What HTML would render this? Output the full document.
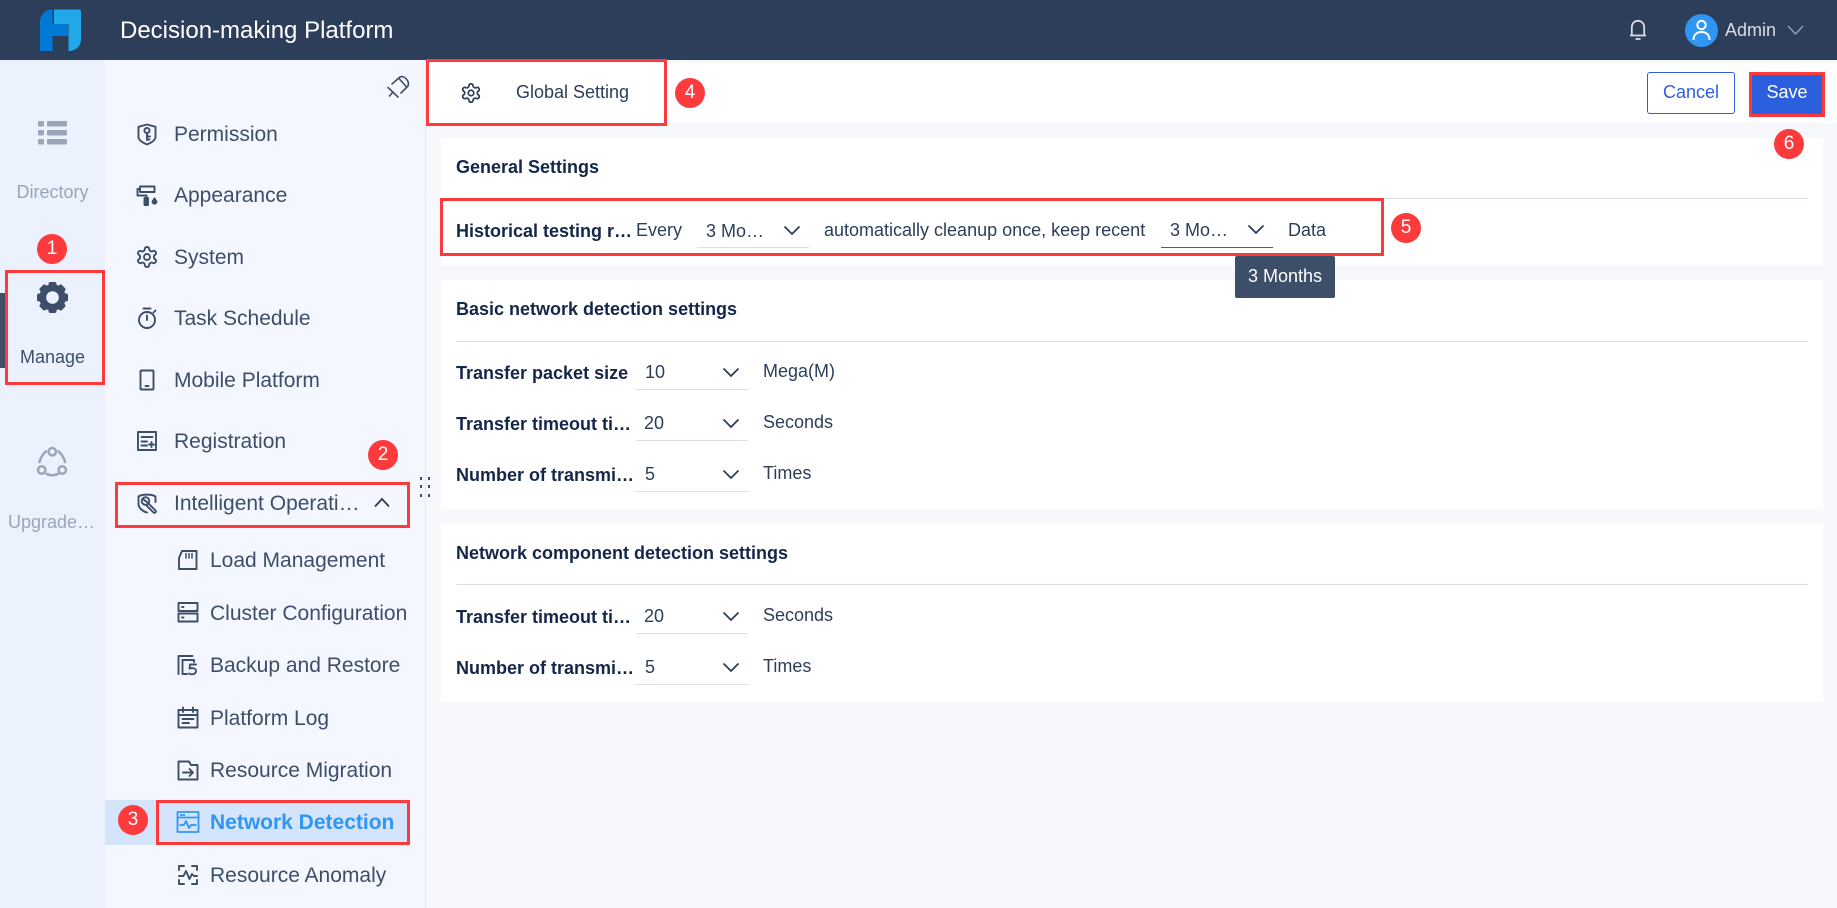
<!DOCTYPE html>
<html><head><meta charset="utf-8"><title>Global Setting</title>
<style>
*{box-sizing:border-box}
html,body{margin:0;padding:0}
body{width:1837px;height:908px;position:relative;overflow:hidden;background:#f7f8fc;font-family:"Liberation Sans",Arial,sans-serif;color:#2c3e5a;font-size:18px}
.a{position:absolute}
.t{position:absolute;white-space:nowrap;line-height:24px;height:24px}
.n{font-size:21px;color:#3d4e68;margin-top:1px}
.b{font-weight:bold;color:#14264a;font-size:18px}
.card{position:absolute;left:441px;width:1382px;background:#fff}
.div{position:absolute;left:456px;width:1352px;height:1px;background:#dfe1ea}
.ul{position:absolute;height:1px;background:#dcdee8;width:112px}
.rb{position:absolute;border:3px solid #fd3a3c}
.c{position:absolute;width:30px;height:30px;border-radius:50%;background:#fd3a3c;color:#fff;text-align:center;line-height:30px;font-size:19px}
svg{position:absolute;overflow:visible}
.ic{fill:none;stroke:#3d4e68;stroke-width:1.9;stroke-linejoin:round;stroke-linecap:round}
.ch{fill:none;stroke:#2c3e5a;stroke-width:1.8}
</style></head><body>

<!-- main bg blocks -->
<div class="a" style="left:0;top:0;width:1837px;height:60px;background:#2d3e5a"></div>
<div class="a" style="left:0;top:60px;width:105px;height:848px;background:#ebf2fd"></div>
<div class="a" style="left:105px;top:60px;width:321px;height:848px;background:#f4f7ff;border-right:1px solid #e6e9f0"></div>
<div class="a" style="left:426px;top:63px;width:1411px;height:60px;background:#fff"></div>

<!-- top bar -->
<svg style="left:0;top:0" width="100" height="60">
<path d="M52.5 9.5C45 9.5 40 15 40 22V51H52.5V36H68V24H52.5Z" fill="#0079d4"/>
<path d="M54 9.5H79Q81 9.5 81 12V39C81 46 76 51 68.5 51V24H54Z" fill="#1fa9e9"/>
</svg>
<div class="t" style="left:120px;top:19px;font-size:24px;color:#fff">Decision-making Platform</div>
<svg style="left:1626px;top:18px" width="24" height="24" fill="none" stroke="#d8dce3" stroke-width="1.8">
<path d="M4 17.5H20M5.8 17.5V9.500C5.8 5.5 8.5 2.8 12 2.8S18.2 5.5 18.2 9.5V17.5"/>
<path d="M9.5 21H14.5"/>
</svg>
<div class="a" style="left:1685px;top:14px;width:33px;height:33px;border-radius:50%;background:#2f96f3"></div>
<svg style="left:1685px;top:14px" width="33" height="33" fill="none" stroke="#fff" stroke-width="2">
<circle cx="16.5" cy="11" r="4.2"/><path d="M8.5 26C8.5 20.5 12 18 16.5 18S24.5 20.5 24.5 26"/>
</svg>
<div class="t" style="left:1725px;top:18px;font-size:18px;color:#d9dde4">Admin</div>
<svg style="left:1787px;top:24px" width="17" height="12" fill="none" stroke="#8f9bad" stroke-width="1.6"><path d="M1 2L8.5 10L16 2"/></svg>

<!-- rail -->
<div class="a" style="left:0;top:293px;width:5px;height:75px;background:#3d4e68"></div>
<svg style="left:37px;top:120px" width="30" height="26" fill="#9aa5b8">
<rect x="1" y="1" width="6" height="5.500" rx="1"/><rect x="10" y="1" width="20" height="5.500" rx="1"/>
<rect x="1" y="10" width="6" height="5.500" rx="1"/><rect x="10" y="10" width="20" height="5.500" rx="1"/>
<rect x="1" y="19" width="6" height="5.500" rx="1"/><rect x="10" y="19" width="20" height="5.500" rx="1"/>
</svg>
<div class="t" style="left:0;width:105px;text-align:center;top:180px;color:#9aa5b8">Directory</div>
<svg style="left:37px;top:282px" width="32" height="32" fill="#3d4e68">
<g transform="translate(15.5,15.5)">
<circle r="9.8" fill="none" stroke="#3d4e68" stroke-width="7"/>
<rect x="-4" y="-15.5" width="8" height="6" rx="2"/>
<rect x="-4" y="-15.5" width="8" height="6" rx="2" transform="rotate(45)"/>
<rect x="-4" y="-15.5" width="8" height="6" rx="2" transform="rotate(90)"/>
<rect x="-4" y="-15.5" width="8" height="6" rx="2" transform="rotate(135)"/>
<rect x="-4" y="-15.5" width="8" height="6" rx="2" transform="rotate(180)"/>
<rect x="-4" y="-15.5" width="8" height="6" rx="2" transform="rotate(225)"/>
<rect x="-4" y="-15.5" width="8" height="6" rx="2" transform="rotate(270)"/>
<rect x="-4" y="-15.5" width="8" height="6" rx="2" transform="rotate(315)"/>
</g></svg>
<div class="t" style="left:0;width:105px;text-align:center;top:345px;color:#3d4e68">Manage</div>
<svg style="left:36px;top:446px" width="34" height="32" fill="none" stroke="#9aa5b8" stroke-width="2.500">
<circle cx="16.3" cy="5.700" r="3.700"/><circle cx="5.700" cy="24" r="3.700"/><circle cx="26.300" cy="24" r="3.700"/>
<path d="M3.300 17C4 12 6.500 8.500 10.700 4.500M22 4.500C26 8.500 28.500 12 29.300 17M9.700 27.500Q16 31 23 27.500"/>
</svg>
<div class="t" style="left:8px;top:510px;color:#9aa5b8">Upgrade…</div>

<!-- pin -->
<svg style="left:387px;top:75px" width="22" height="22" fill="none" stroke="#3d4e68" stroke-width="1.6" stroke-linejoin="round" stroke-linecap="round">
<path d="M1 12.500L11 22"/>
<path d="M5 9L13 2C17 0 23 6 21 11L14 18"/>
<path d="M12 3.500L19.500 12"/>
<path d="M6 17L2.500 21"/>
</svg>

<!-- nav -->
<svg class="ic" style="left:135px;top:122px" width="24" height="24" viewBox="0 0 24 24">
<path d="M12 2.500L20.500 4.800V15C20.500 18 16 20.800 12 22.500C8 20.800 3.500 18 3.500 15V4.800Z"/><circle cx="12" cy="8.500" r="2.600"/><path d="M12 11V18M12 14.500H15M12 17.500H14.500"/>
</svg>
<div class="t n" style="left:174px;top:122px">Permission</div>
<svg class="ic" style="left:135px;top:183px" width="24" height="24" viewBox="0 0 24 24">
<path d="M5 3.500H19.500V9H5ZM5 6H2.500V12.500H11.500V15"/>
<rect x="9.500" y="15" width="3.500" height="7" fill="#3d4e68"/><path d="M19.500 14L21.800 17.200A2.800 2.800 0 1 1 17.200 17.200Z" fill="#3d4e68" stroke="none"/>
</svg>
<div class="t n" style="left:174px;top:183px">Appearance</div>
<svg class="ic" style="left:135px;top:245px" width="24" height="24" viewBox="0 0 24 24">
<path d="M12.220 2h-.44a2 2 0 0 0-2 2v.18a2 2 0 0 1-1 1.730l-.43.25a2 2 0 0 1-2 0l-.15-.08a2 2 0 0 0-2.730.73l-.22.38a2 2 0 0 0 .73 2.730l.15.1a2 2 0 0 1 1 1.720v.51a2 2 0 0 1-1 1.740l-.15.09a2 2 0 0 0-.73 2.730l.22.38a2 2 0 0 0 2.730.73l.15-.08a2 2 0 0 1 2 0l.43.25a2 2 0 0 1 1 1.730V20a2 2 0 0 0 2 2h.44a2 2 0 0 0 2-2v-.18a2 2 0 0 1 1-1.730l.43-.25a2 2 0 0 1 2 0l.15.08a2 2 0 0 0 2.730-.73l.22-.39a2 2 0 0 0-.73-2.730l-.15-.08a2 2 0 0 1-1-1.740v-.5a2 2 0 0 1 1-1.740l.15-.09a2 2 0 0 0 .73-2.730l-.22-.38a2 2 0 0 0-2.730-.73l-.15.08a2 2 0 0 1-2 0l-.43-.25a2 2 0 0 1-1-1.730V4a2 2 0 0 0-2-2z"/><circle cx="12" cy="12" r="3"/>
</svg>
<div class="t n" style="left:174px;top:245px">System</div>
<svg class="ic" style="left:135px;top:306px" width="24" height="24" viewBox="0 0 24 24">
<circle cx="12" cy="14" r="8"/><path d="M8.500 2.500H15.500M12 9.500V14M18.500 6.500L20.500 4.500"/>
</svg>
<div class="t n" style="left:174px;top:306px">Task Schedule</div>
<svg class="ic" style="left:135px;top:368px" width="24" height="24" viewBox="0 0 24 24">
<rect x="5.500" y="2.500" width="13" height="19" rx="1"/><path d="M10.500 18H13.500"/>
</svg>
<div class="t n" style="left:174px;top:368px">Mobile Platform</div>
<svg class="ic" style="left:135px;top:429px" width="24" height="24" viewBox="0 0 24 24">
<rect x="3" y="3" width="18" height="18"/><path d="M6.500 8H17.500M6.500 12.500H12M6.500 16.500H12M14 15.500H19M16.500 13V18"/>
</svg>
<div class="t n" style="left:174px;top:429px">Registration</div>
<svg class="ic" style="left:135px;top:491px" width="24" height="24" viewBox="0 0 24 24">
<path d="M20.500 11V5.500C17 3 7 3 3.500 5.500V13C3.500 17 8 20.500 12 21.500"/><circle cx="10.500" cy="10" r="3.800"/><path d="M8 8L13 12L20.500 19.500C21.500 21 20 22.500 18.500 21.500L11 14"/>
</svg>
<div class="t n" style="left:174px;top:491px">Intelligent Operati…</div>
<svg style="left:373px;top:496px" width="18" height="12" fill="none" stroke="#2c3e5a" stroke-width="1.8"><path d="M2 10.500L9 3L16 10.500"/></svg>

<svg class="ic" style="left:176px;top:548px" width="24" height="24" viewBox="0 0 24 24">
<path d="M6 3H20.500V21H3V10Z"/><path d="M10 5.500V10M13 5.500V10M16 5.500V10" stroke-width="1.500"/>
</svg>
<div class="t n" style="left:210px;top:548px">Load Management</div>
<svg class="ic" style="left:176px;top:600px" width="24" height="24" viewBox="0 0 24 24">
<rect x="2.500" y="3" width="19" height="8"/><rect x="2.500" y="13.500" width="19" height="8"/><path d="M6 7H7.500M6 17.500H7.500"/>
</svg>
<div class="t n" style="left:210px;top:601px">Cluster Configuration</div>
<svg class="ic" style="left:176px;top:653px" width="24" height="24" viewBox="0 0 24 24">
<path d="M2.500 21V3H16.500M6.500 21V7H18V9M6.500 21H11"/><path d="M20 11.500H14L13.500 15.500C15 15 20 14.500 20 18C20 21.500 15 22 13 20.500"/>
</svg>
<div class="t n" style="left:210px;top:653px">Backup and Restore</div>
<svg class="ic" style="left:176px;top:706px" width="24" height="24" viewBox="0 0 24 24">
<rect x="2.500" y="4" width="19" height="17.500"/><path d="M7 1.500V6M17 1.500V6M2.500 9H21.500M6.500 13H17.500M6.500 17H13"/>
</svg>
<div class="t n" style="left:210px;top:706px">Platform Log</div>
<svg class="ic" style="left:176px;top:758px" width="24" height="24" viewBox="0 0 24 24">
<path d="M2.500 3.500H13L15 7H21.500V21.500H2.500Z"/><path d="M7 14.500H17M13.500 11L17 14.500L13.500 18"/>
</svg>
<div class="t n" style="left:210px;top:758px">Resource Migration</div>

<div class="a" style="left:105px;top:800px;width:305px;height:45px;background:#d4e5fb"></div>
<svg style="left:176px;top:810px" width="24" height="24" viewBox="0 0 24 24" fill="none" stroke="#2f96f3" stroke-width="1.8" stroke-linejoin="round">
<rect x="1.500" y="2" width="21" height="20"/><path d="M1.500 7.500H22.500M4 5H9"/><path d="M3.500 15H8L10 11L13 18L15 15H20.500"/>
</svg>
<div class="t" style="left:210px;top:811px;font-size:21px;font-weight:bold;color:#2f96f3">Network Detection</div>

<svg class="ic" style="left:176px;top:863px" width="24" height="24" viewBox="0 0 24 24">
<path d="M8 3H3V7M16 3H21V7M8 21H3V17M16 21H21V17"/><path d="M3 13H7.500L10 8L13.500 16L16 11L18 13H21"/>
</svg>
<div class="t n" style="left:210px;top:863px">Resource Anomaly</div>

<div class="a" style="left:420px;top:477px;width:2px;height:3px;background:#3d4e68"></div>
<div class="a" style="left:420px;top:485px;width:2px;height:3px;background:#3d4e68"></div>
<div class="a" style="left:420px;top:494px;width:2px;height:3px;background:#3d4e68"></div>
<div class="a" style="left:428px;top:477px;width:2px;height:3px;background:#3d4e68"></div>
<div class="a" style="left:428px;top:485px;width:2px;height:3px;background:#3d4e68"></div>
<div class="a" style="left:428px;top:494px;width:2px;height:3px;background:#3d4e68"></div>

<!-- header -->
<svg class="ic" style="left:460px;top:82px;stroke:#2c3e5a" width="22" height="22" viewBox="0 0 24 24">
<path d="M12.220 2h-.44a2 2 0 0 0-2 2v.18a2 2 0 0 1-1 1.730l-.43.25a2 2 0 0 1-2 0l-.15-.08a2 2 0 0 0-2.730.73l-.22.38a2 2 0 0 0 .73 2.730l.15.1a2 2 0 0 1 1 1.720v.51a2 2 0 0 1-1 1.740l-.15.09a2 2 0 0 0-.73 2.730l.22.38a2 2 0 0 0 2.730.73l.15-.08a2 2 0 0 1 2 0l.43.25a2 2 0 0 1 1 1.730V20a2 2 0 0 0 2 2h.44a2 2 0 0 0 2-2v-.18a2 2 0 0 1 1-1.730l.43-.25a2 2 0 0 1 2 0l.15.08a2 2 0 0 0 2.730-.73l.22-.39a2 2 0 0 0-.73-2.730l-.15-.08a2 2 0 0 1-1-1.740v-.5a2 2 0 0 1 1-1.740l.15-.09a2 2 0 0 0 .73-2.730l-.22-.38a2 2 0 0 0-2.730-.73l-.15.08a2 2 0 0 1-2 0l-.43-.25a2 2 0 0 1-1-1.730V4a2 2 0 0 0-2-2z"/><circle cx="12" cy="12" r="3"/>
</svg>
<div class="t" style="left:516px;top:80px">Global Setting</div>
<div class="a" style="left:1647px;top:72px;width:88px;height:42px;border:1px solid #2b5fdd;border-radius:3px;background:#fff;color:#2b5fdd;text-align:center;line-height:38px">Cancel</div>
<div class="a" style="left:1749px;top:72px;width:76px;height:45px;background:#2b5fdd;color:#fff;text-align:center;line-height:41px">Save</div>

<!-- cards -->
<div class="card" style="top:138px;height:127px"></div>
<div class="card" style="top:280px;height:229px"></div>
<div class="card" style="top:524px;height:178px"></div>
<div class="div" style="top:198px"></div>
<div class="div" style="top:341px"></div>
<div class="div" style="top:584px"></div>

<div class="t b" style="left:456px;top:155px">General Settings</div>
<div class="t b" style="left:456px;top:219px">Historical testing r…</div>
<div class="t" style="left:636px;top:218px">Every</div>
<div class="t" style="left:706px;top:219px">3 Mo…</div>
<svg class="ch" style="left:783px;top:225px" width="18" height="11"><path d="M1.500 1.500L9 9L16.500 1.500"/></svg>
<div class="ul" style="left:697px;top:247px"></div>
<div class="t" style="left:824px;top:218px">automatically cleanup once, keep recent</div>
<div class="t" style="left:1170px;top:218px">3 Mo…</div>
<svg class="ch" style="left:1247px;top:224px" width="18" height="11"><path d="M1.500 1.500L9 9L16.500 1.500"/></svg>
<div class="ul" style="left:1161px;top:247px;background:#2b5fdd"></div>
<div class="t" style="left:1288px;top:218px">Data</div>
<div class="a" style="left:1235px;top:256px;width:100px;height:42px;background:#3d4e68;border-radius:2px;color:#fff;text-align:center;line-height:40px">3 Months</div>

<div class="t b" style="left:456px;top:297px">Basic network detection settings</div>
<div class="t b" style="left:456px;top:361px">Transfer packet size</div>
<div class="t" style="left:645px;top:360px">10</div>
<svg class="ch" style="left:722px;top:367px" width="18" height="11"><path d="M1.500 1.500L9 9L16.500 1.500"/></svg>
<div class="ul" style="left:636px;top:389px"></div>
<div class="t" style="left:763px;top:359px">Mega(M)</div>

<div class="t b" style="left:456px;top:412px">Transfer timeout ti…</div>
<div class="t" style="left:644px;top:411px">20</div>
<svg class="ch" style="left:722px;top:418px" width="18" height="11"><path d="M1.500 1.500L9 9L16.500 1.500"/></svg>
<div class="ul" style="left:636px;top:440px"></div>
<div class="t" style="left:763px;top:410px">Seconds</div>

<div class="t b" style="left:456px;top:463px">Number of transmi…</div>
<div class="t" style="left:645px;top:462px">5</div>
<svg class="ch" style="left:722px;top:469px" width="18" height="11"><path d="M1.500 1.500L9 9L16.500 1.500"/></svg>
<div class="ul" style="left:636px;top:491px"></div>
<div class="t" style="left:763px;top:461px">Times</div>

<div class="t b" style="left:456px;top:541px">Network component detection settings</div>
<div class="t b" style="left:456px;top:605px">Transfer timeout ti…</div>
<div class="t" style="left:644px;top:604px">20</div>
<svg class="ch" style="left:722px;top:611px" width="18" height="11"><path d="M1.500 1.500L9 9L16.500 1.500"/></svg>
<div class="ul" style="left:636px;top:633px"></div>
<div class="t" style="left:763px;top:603px">Seconds</div>

<div class="t b" style="left:456px;top:656px">Number of transmi…</div>
<div class="t" style="left:645px;top:655px">5</div>
<svg class="ch" style="left:722px;top:662px" width="18" height="11"><path d="M1.500 1.500L9 9L16.500 1.500"/></svg>
<div class="ul" style="left:636px;top:684px"></div>
<div class="t" style="left:763px;top:654px">Times</div>

<!-- red annotation boxes -->
<div class="rb" style="left:5px;top:270px;width:100px;height:115px"></div>
<div class="rb" style="left:115px;top:482px;width:295px;height:46px"></div>
<div class="rb" style="left:156px;top:800px;width:254px;height:45px"></div>
<div class="rb" style="left:426px;top:59px;width:241px;height:67px"></div>
<div class="rb" style="left:440px;top:198px;width:944px;height:58px"></div>
<div class="rb" style="left:1749px;top:72px;width:76px;height:45px"></div>

<div class="c" style="left:37px;top:234px">1</div>
<div class="c" style="left:368px;top:440px">2</div>
<div class="c" style="left:118px;top:805px">3</div>
<div class="c" style="left:675px;top:78px">4</div>
<div class="c" style="left:1391px;top:213px">5</div>
<div class="c" style="left:1774px;top:129px">6</div>
</body></html>
